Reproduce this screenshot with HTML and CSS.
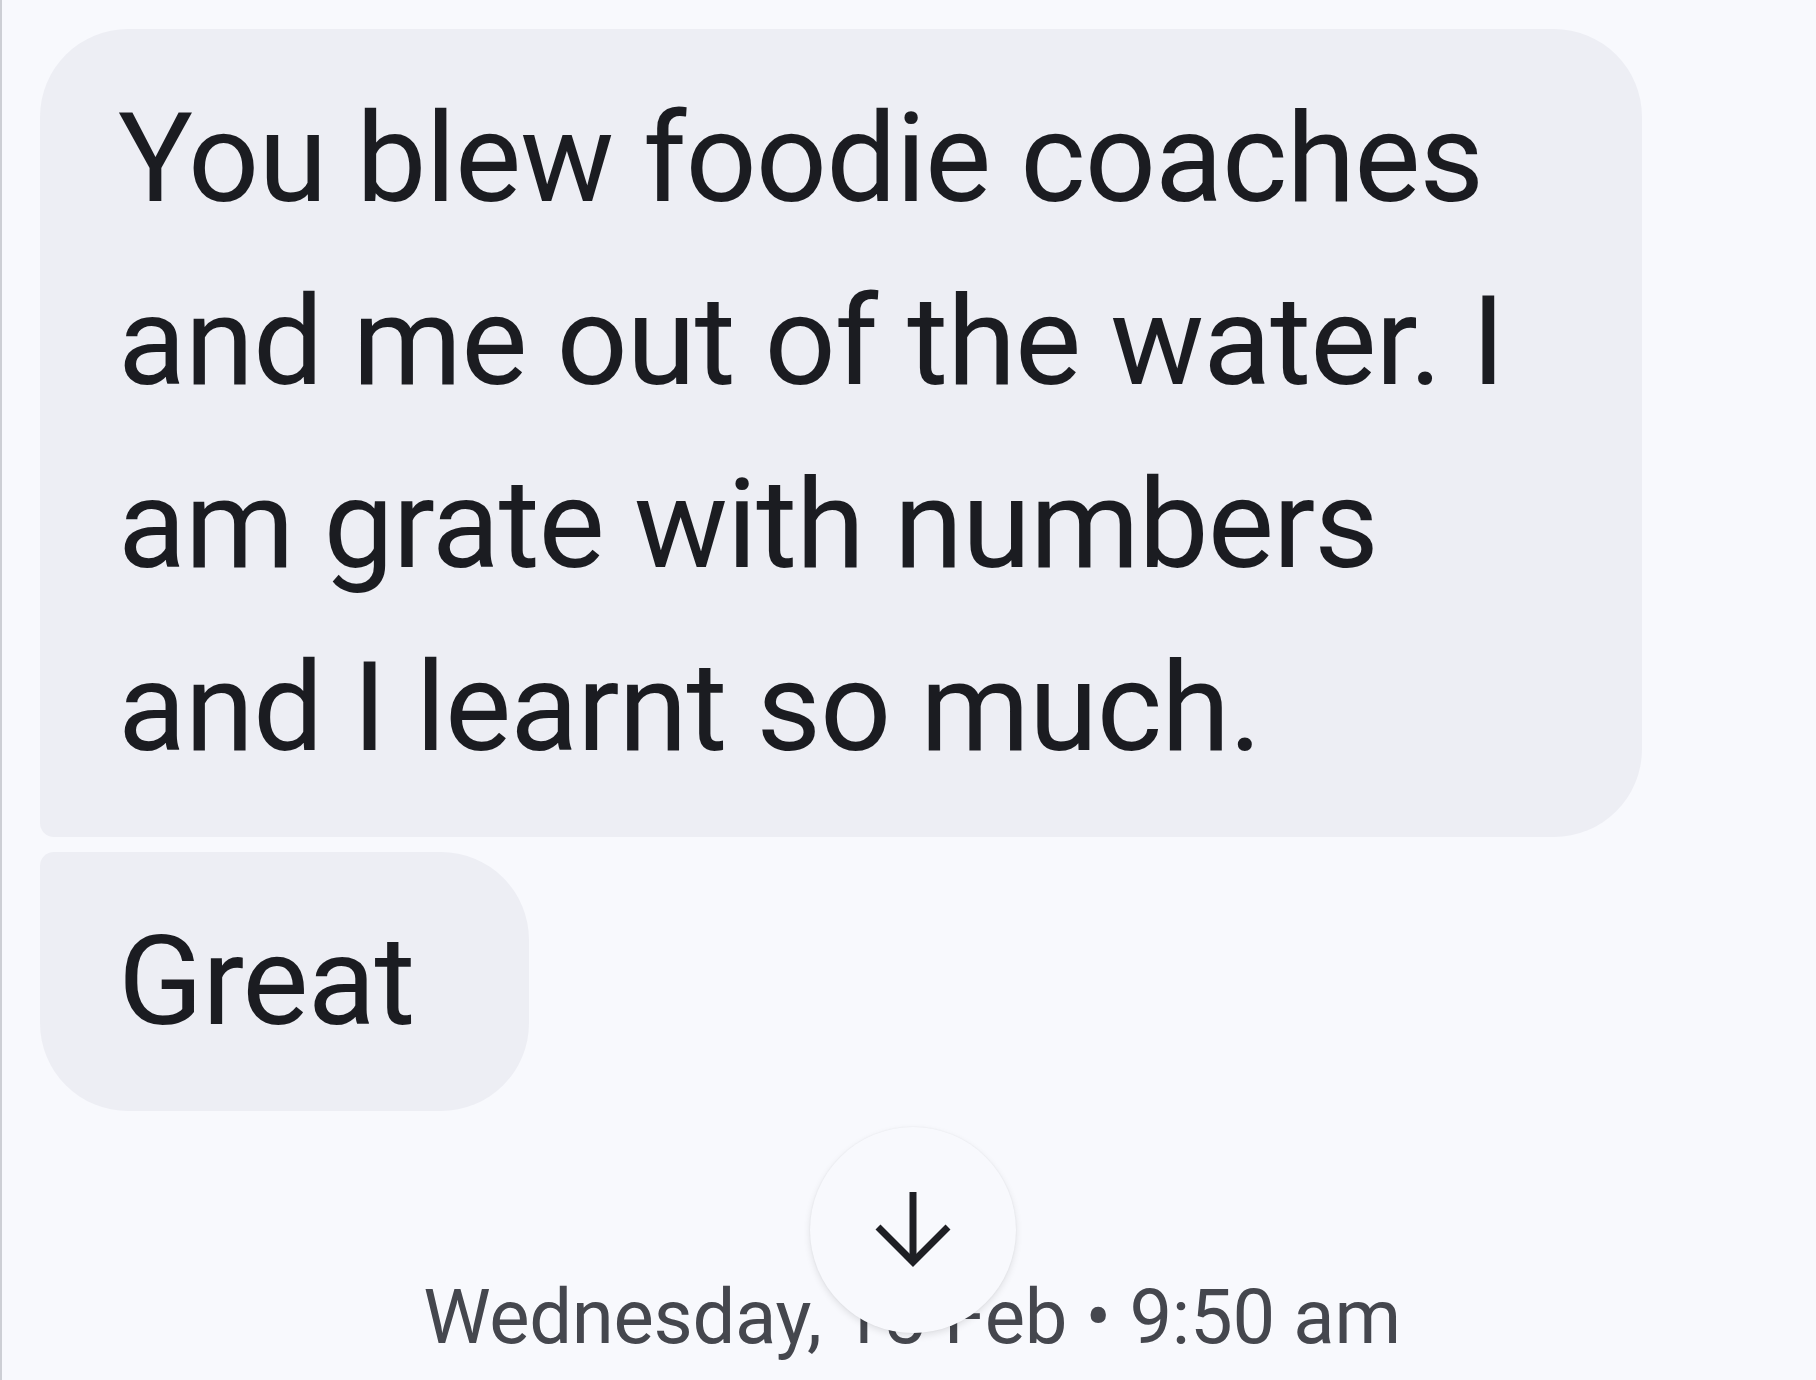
FILE: index.html
```html
<!DOCTYPE html>
<html lang="en">
<head>
<meta charset="utf-8">
<title>Messages</title>
<link rel="stylesheet" href="styles.css">
</head>
<body>
<main class="thread">
  <div class="messages">
    <div class="bubble bubble-first bubble-wide">You blew foodie coaches<br>and me out of the water. I<br>am grate with numbers<br>and I learnt so much.</div>
    <div class="bubble bubble-last bubble-short">Great</div>
  </div>
  <div class="timestamp">Wednesday, 15 Feb • 9:50 am</div>
  <button class="scroll-down" aria-label="Scroll to bottom">
    <svg class="scroll-icon" viewBox="0 0 80 80" width="80" height="80" aria-hidden="true">
      <line x1="40" y1="2" x2="40" y2="70" />
      <polyline points="5,37 40,72 75,37" />
    </svg>
  </button>
</main>
</body>
</html>
```
FILE: styles.css
```css
html, body {
  margin: 0;
  padding: 0;
  background: #f8f9fd;
}
body {
  font-family: Roboto, "Noto Sans", "Liberation Sans", sans-serif;
  color: #1b1c21;
}
.thread {
  position: relative;
  box-sizing: border-box;
  height: 1380px;
  border-left: 2px solid #cdcfd5;
  padding: 29px 0 0 38px;
  overflow: hidden;
}
.messages {
  display: flex;
  flex-direction: column;
  align-items: flex-start;
  gap: 15px;
}
.bubble {
  box-sizing: border-box;
  background: #edeef4;
  font-size: 125px;
  line-height: 183px;
  letter-spacing: -1px;
  padding: 38px 114px 38px 78px;
  white-space: nowrap;
}
.bubble-wide {
  width: 1602px;
}
.bubble-first {
  border-radius: 88px 88px 88px 14px;
}
.bubble-last {
  border-radius: 14px 88px 88px 88px;
}
.timestamp {
  margin-top: 156px;
  margin-left: -38px;
  padding-left: 6px;
  text-align: center;
  font-size: 76px;
  line-height: 100px;
  letter-spacing: -0.3px;
  color: #45474e;
}
.scroll-down {
  position: absolute;
  left: 808px;
  top: 1127px;
  width: 206px;
  height: 206px;
  border: none;
  border-radius: 50%;
  background: #f8f9fd;
  box-shadow: 0 3px 7px rgba(0, 0, 0, 0.10), 0 0 2px rgba(0, 0, 0, 0.06);
  display: flex;
  align-items: center;
  justify-content: center;
  padding: 0;
}
.scroll-icon {
  fill: none;
  stroke: #1e1f24;
  stroke-width: 7;
  stroke-linecap: butt;
  stroke-linejoin: miter;
}
```
